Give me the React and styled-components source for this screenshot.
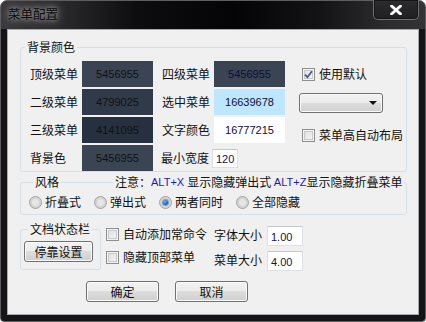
import React from "react";
import styled, { createGlobalStyle } from "styled-components";

const Page = createGlobalStyle`
  body {
    margin: 0;
    background: #ffffff;
    font-family: "Noto Sans CJK SC", "Noto Sans", sans-serif;
    font-size: 12px;
    color: #111;
  }
`;

const Frame = styled.div`
  width: 426px;
  height: 322px;
  box-sizing: border-box;
  border: 1px solid #5e5e61;
  border-radius: 7px 7px 4px 4px;
  padding: 0 6px 6px 6px;
  display: flex;
  flex-direction: column;
  background:
    linear-gradient(to bottom, transparent 28px, #151517 28px),
    linear-gradient(90deg, #3a3a3d 0%, #2a2a2d 14%, #0d0d10 32%, #040406 55%, #131316 75%, #2b2b2e 90%, #333336 100%);
`;

const TitleBar = styled.div`
  height: 28px;
  display: flex;
  align-items: flex-start;
  justify-content: space-between;
`;

const Title = styled.div`
  margin: 5px 0 0 1px;
  font-size: 12.5px;
  line-height: 16px;
  color: #0a0a0a;
  text-shadow: 0 0 4px #9a9a9a, 0 0 8px #8a8a8a, 0 0 12px #6a6a6a;
`;

const CloseButton = styled.div`
  margin-top: -1px;
  width: 46px;
  height: 20px;
  box-sizing: border-box;
  border: 1px solid #6f6f72;
  border-top: none;
  border-radius: 0 0 5px 5px;
  background: linear-gradient(#2c2c2f, #1f1f22);
  box-shadow: inset 0 0 0 1px #161618;
  display: flex;
  align-items: center;
  justify-content: center;
`;

const Client = styled.div`
  flex: 1;
  box-sizing: border-box;
  border: 1px solid #a9a9ab;
  background: #f0f0f0;
  padding: 10px 11px 0 12px;
  display: flex;
  flex-direction: column;
`;

const Group = styled.fieldset`
  margin: ${(p) => p.$top || 0}px 0 0 0;
  padding: ${(p) => p.$pad || "0"};
  border: 1px solid #d5dfe5;
  border-radius: 3px;
  min-width: 0;
  width: ${(p) => (p.$w ? `${p.$w}px` : "auto")};
  box-sizing: border-box;
`;

const Legend = styled.legend`
  margin-left: 4px;
  padding: 0 2px;
  font-size: 12px;
  line-height: 14px;
  display: flex;
  align-items: center;
`;

const LegendLine = styled.span`
  width: 52px;
  height: 1px;
  margin: 0 2px;
  background: #d5dfe5;
`;

const Note = styled.span`
  display: flex;
  align-items: center;
`;

const Hotkey = styled.span`
  font-family: "Liberation Sans", Arial, sans-serif;
  font-size: 11px;
  color: #1c1ca6;
  margin: 0 ${(p) => p.$space || 0}px 0 0;
`;

const ColorGrid = styled.div`
  margin: 7px 0 0 9px;
  display: grid;
  grid-template-columns: 52px 71px 61px 71px 1fr;
  grid-template-rows: repeat(4, 26px);
  row-gap: 2px;
  align-items: center;
`;

const Label = styled.span`
  padding-left: ${(p) => p.$indent || 0}px;
  white-space: nowrap;
  line-height: 14px;
`;

const Swatch = styled.div`
  height: 26px;
  background: ${(p) => p.$bg};
  color: ${(p) => p.$fg || "#111"};
  font-family: "Liberation Sans", Arial, sans-serif;
  font-size: 11px;
  display: flex;
  align-items: center;
  justify-content: center;
`;

const SideColumn = styled.div`
  grid-column: 5;
  grid-row: 1 / span 4;
  align-self: start;
  padding: 6px 0 0 17px;
  display: flex;
  flex-direction: column;
  align-items: flex-start;
`;

const CheckRow = styled.label`
  display: flex;
  align-items: center;
  gap: 4px;
  height: 14px;
  line-height: 14px;
  margin: ${(p) => p.$m || "0"};
  white-space: nowrap;
`;

const Box = styled.span`
  width: 13px;
  height: 13px;
  box-sizing: border-box;
  border: 1px solid #8e8f8f;
  background: linear-gradient(135deg, #dcdcdc, #f8f8f8);
  box-shadow: inset 0 0 0 1px #f4f4f4, inset 0 0 0 2px #c9c9c9;
  display: flex;
  align-items: center;
  justify-content: center;
  flex: none;
`;

const Dropdown = styled.div`
  width: 84px;
  height: 20px;
  box-sizing: border-box;
  margin: 12px 0 0 -3px;
  border: 1px solid #707070;
  border-radius: 3px;
  background: linear-gradient(#f2f2f2 0%, #ebebeb 50%, #dddddd 50%, #cfcfcf 100%);
  box-shadow: inset 0 0 0 1px #fbfbfb;
  display: flex;
  align-items: center;
  justify-content: flex-end;
  padding-right: 5px;
`;

const Arrow = styled.span`
  width: 0;
  height: 0;
  border-left: 4px solid transparent;
  border-right: 4px solid transparent;
  border-top: 4px solid #111;
`;

const TextBox = styled.div`
  width: ${(p) => p.$w}px;
  height: ${(p) => p.$h}px;
  box-sizing: border-box;
  margin-left: ${(p) => p.$ml || 0}px;
  border: 1px solid #dde1e7;
  border-top-color: #c3c7ce;
  background: #fff;
  font-family: "Liberation Sans", Arial, sans-serif;
  font-size: 11px;
  color: #13134a;
  display: flex;
  align-items: center;
  padding: 2px 0 0 3px;
`;

const RadioRow = styled.div`
  display: flex;
  align-items: center;
  gap: 13px;
  height: 14px;
`;

const RadioItem = styled.label`
  display: flex;
  align-items: center;
  gap: 3px;
  line-height: 14px;
`;

const Radio = styled.span`
  width: 13px;
  height: 13px;
  box-sizing: border-box;
  border-radius: 50%;
  border: 1px solid #a2a2a2;
  background: radial-gradient(circle at 50% 50%, #e6e6e6 0 35%, #cfcfcf 60%, #f4f4f4 100%);
  display: flex;
  align-items: center;
  justify-content: center;
  flex: none;
`;

const Dot = styled.span`
  width: 5px;
  height: 5px;
  border-radius: 50%;
  background: radial-gradient(circle at 40% 35%, #7fb2ec, #1c5fb0 60%, #0f3f86);
  box-shadow: 0 0 0 1px #6d9bd0;
`;

const BottomRow = styled.div`
  margin-top: 7px;
  display: flex;
  align-items: flex-start;
`;

const PushButton = styled.div`
  width: ${(p) => p.$w}px;
  height: ${(p) => p.$h}px;
  box-sizing: border-box;
  border: 1px solid #707070;
  border-radius: 3px;
  background: linear-gradient(#f2f2f2 0%, #ebebeb 50%, #dddddd 50%, #cfcfcf 100%);
  box-shadow: inset 0 0 0 1px #fbfbfb;
  display: flex;
  align-items: center;
  justify-content: center;
  font-size: 12px;
  line-height: 14px;
`;

const Options = styled.div`
  margin: 4px 0 0 5px;
  display: grid;
  grid-template-columns: 108px 53px 36px;
  grid-template-rows: 20px 20px;
  row-gap: 5px;
`;

const OptionLabel = styled.span`
  align-self: center;
  line-height: 14px;
  margin-top: -2px;
`;

const ButtonBar = styled.div`
  margin: 10px 0 0 66px;
  display: flex;
  gap: 16px;
`;

const Check = () => (
  <svg width="9" height="9" viewBox="0 0 9 9">
    <path d="M1 4.6 L3.4 7.2 L8 1.2" fill="none" stroke="#47598a" strokeWidth="1.8" />
  </svg>
);

const CloseGlyph = () => (
  <svg width="12" height="10" viewBox="0 0 12 10">
    <path d="M1.5 1 L10.5 9 M10.5 1 L1.5 9" stroke="#5a5a5a" strokeWidth="4" strokeLinecap="square" />
    <path d="M1.5 1 L10.5 9 M10.5 1 L1.5 9" stroke="#ffffff" strokeWidth="2.4" strokeLinecap="square" />
  </svg>
);

const CheckBox = ({ checked, children, m }) => (
  <CheckRow $m={m}>
    <Box>{checked && <Check />}</Box>
    {children}
  </CheckRow>
);

const colors = [
  ["顶级菜单", "5456955", "#3b4453", "四级菜单", "5456955", "#3b4453"],
  ["二级菜单", "4799025", "#313a49", "选中菜单", "16639678", "#bee6fd"],
  ["三级菜单", "4141095", "#27303f", "文字颜色", "16777215", "#ffffff"],
];

const styles = ["折叠式", "弹出式", "两者同时", "全部隐藏"];

export default function App() {
  return (
    <>
      <Page />
      <Frame>
        <TitleBar>
          <Title>菜单配置</Title>
          <CloseButton>
            <CloseGlyph />
          </CloseButton>
        </TitleBar>
        <Client>
          <Group $pad="0">
            <Legend>背景颜色</Legend>
            <ColorGrid>
              {colors.map(([l1, v1, c1, l2, v2, c2]) => (
                <React.Fragment key={l1}>
                  <Label>{l1}</Label>
                  <Swatch $bg={c1}>{v1}</Swatch>
                  <Label $indent={9}>{l2}</Label>
                  <Swatch $bg={c2} $fg="#0e0e3a">{v2}</Swatch>
                </React.Fragment>
              ))}
              <Label>背景色</Label>
              <Swatch $bg="#3b4453">5456955</Swatch>
              <Label $indent={8}>最小宽度</Label>
              <TextBox $w={26} $h={19} $ml={-2}>120</TextBox>
              <SideColumn>
                <CheckBox checked>使用默认</CheckBox>
                <Dropdown>
                  <Arrow />
                </Dropdown>
                <CheckBox m="15px 0 0 0">菜单高自动布局</CheckBox>
              </SideColumn>
            </ColorGrid>
          </Group>

          <Group $top={3} $pad="6px 0 5px 8px">
            <Legend>
              风格
              <LegendLine />
              <Note>
                注意：<Hotkey $space={3}>ALT+X</Hotkey>显示隐藏弹出式&nbsp;<Hotkey>ALT+Z</Hotkey>显示隐藏折叠菜单
              </Note>
            </Legend>
            <RadioRow>
              {styles.map((s) => (
                <RadioItem key={s}>
                  <Radio>{s === "两者同时" && <Dot />}</Radio>
                  {s}
                </RadioItem>
              ))}
            </RadioRow>
          </Group>

          <BottomRow>
            <Group $w={81} $pad="5px 0 7px 3px">
              <Legend>文档状态栏</Legend>
              <PushButton $w={69} $h={21}>停靠设置</PushButton>
            </Group>
            <Options>
              <CheckBox m="1px 0 0 0">自动添加常命令</CheckBox>
              <OptionLabel>字体大小</OptionLabel>
              <TextBox $w={36} $h={20}>1.00</TextBox>
              <CheckBox m="-1px 0 0 0">隐藏顶部菜单</CheckBox>
              <OptionLabel>菜单大小</OptionLabel>
              <TextBox $w={36} $h={20}>4.00</TextBox>
            </Options>
          </BottomRow>

          <ButtonBar>
            <PushButton $w={73} $h={21}>确定</PushButton>
            <PushButton $w={73} $h={21}>取消</PushButton>
          </ButtonBar>
        </Client>
      </Frame>
    </>
  );
}
